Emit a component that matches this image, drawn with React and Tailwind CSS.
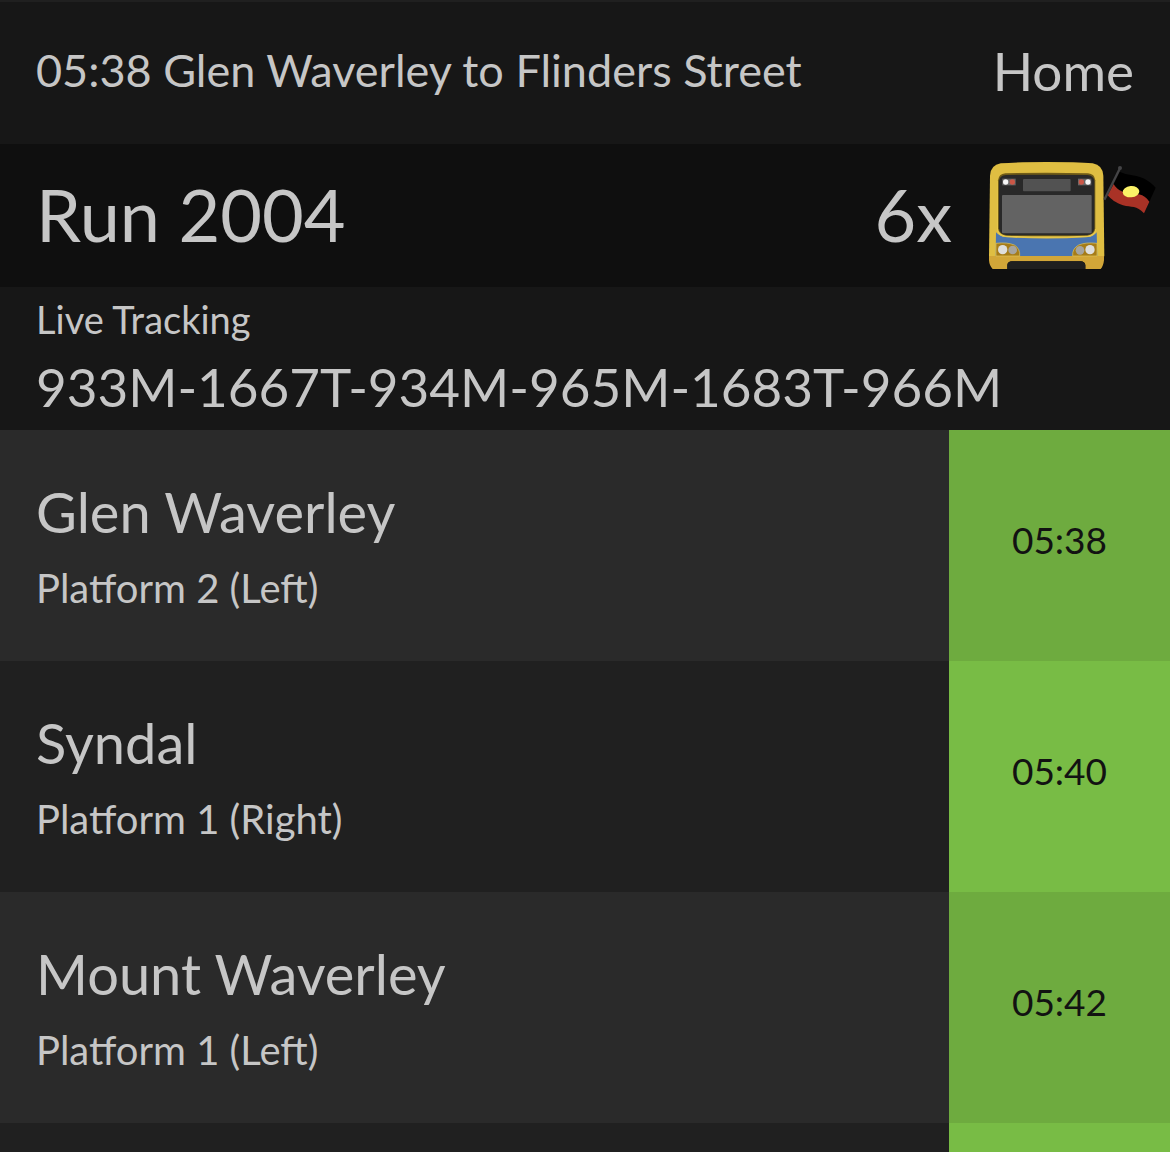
const stops = [
  { name: "Glen Waverley", platform: "Platform 2 (Left)", time: "05:38" },
  { name: "Syndal", platform: "Platform 1 (Right)", time: "05:40" },
  { name: "Mount Waverley", platform: "Platform 1 (Left)", time: "05:42" },
];

function TrainIcon() {
  return (
    <svg viewBox="54 48 504 327" className="h-[109px] w-[168px] shrink-0" role="img" aria-label="Train">
      {/* Shell */}
      <path d="M60 92 Q62 60 92 55 Q140 51 230 51 Q320 51 368 55 Q398 60 400 92 L403 334 H57 Z" fill="#dfbe42" />
      <path d="M57 333 H402 V346 Q400 364 392 372 H346 V360 Q344 349 332 349 H126 Q113 349 112 360 V372 H68 Q58 362 57 346 Z" fill="#d2a638" />
      <path d="M112 372 V360 Q114 349 126 349 H332 Q344 349 346 360 V372 Z" fill="#1f1f1f" />

      {/* Windscreen */}
      <path d="M78 262 Q90 276 110 277 Q230 284 350 277 Q370 276 380 262 L382 333 H77 Z" fill="#4a75b0" />
      <path d="M83 108 Q84 88 105 86 Q230 82 355 86 Q376 88 377 108 L378 254 Q376 274 352 276 Q230 281 108 276 Q83 274 81 254 Z" fill="#e8c84c" />
      <path d="M84 106 Q86 87 106 85 Q230 82 354 85 Q374 87 376 106 L376 250 Q374 270 352 272 Q230 275 108 272 Q86 270 84 250 Z" fill="#705c18" />
      <path d="M87 108 Q89 92 108 90 Q230 88 352 90 Q371 92 373 108 L373 250 Q371 268 352 270 Q230 272 108 270 Q89 268 87 250 Z" fill="#292929" />
      <rect x="159" y="102" width="143" height="37" rx="3" fill="#525252" />
      <rect x="96" y="150" width="269" height="115" rx="3" fill="#636363" />

      {/* Marker lights */}
      <rect x="97" y="101" width="40" height="20" fill="#686868" />
      <rect x="324" y="101" width="40" height="20" fill="#686868" />
      <circle cx="107" cy="111" r="8" fill="#f5f5f5" />
      <circle cx="127" cy="111" r="8" fill="#cb5747" />
      <circle cx="334" cy="111" r="8" fill="#cb5747" />
      <circle cx="354" cy="111" r="8" fill="#f5f5f5" />

      {/* Headlights */}
      <path d="M78 295 Q112 291 133 300 Q151 311 149 333 H78 Z" fill="#a67c18" stroke="#e3c75b" strokeWidth="2" />
      <path d="M381 295 Q347 291 326 300 Q306 311 308 333 H381 Z" fill="#a67c18" stroke="#e3c75b" strokeWidth="2" />
      <circle cx="98" cy="314" r="14" fill="#dededc" />
      <circle cx="128" cy="315" r="13" fill="#a6a49e" />
      <circle cx="330" cy="316" r="13" fill="#a6a49e" />
      <circle cx="360" cy="314" r="14" fill="#dededc" />

      {/* Flag */}
      <path d="M449 80 C475 93 490 86 520 100 C540 110 548 119 557 128 L538 170 C520 144 498 147 478 145 C454 142 440 133 431 117 Z" fill="#000000" />
      <path d="M431 117 C440 133 454 142 478 145 C498 147 520 144 538 170 L522 205 C500 181 484 188 459 181 C437 174 424 163 413 151 Z" fill="#a93226" />
      <ellipse cx="483" cy="140" rx="25" ry="17" fill="#fbf267" transform="rotate(-5 483 140)" />
      <path d="M450 70 L403 164" stroke="#444446" strokeWidth="7" />
      <circle cx="450" cy="69" r="6" fill="#444446" />
    </svg>
  );
}

function StopRow({ stop }) {
  return (
    <li className="group flex h-[231px] odd:bg-[#2a2a2a] even:bg-[#202020]">
      <div className="flex min-w-0 flex-1 flex-col justify-center gap-3 pl-9">
        <h2 className="text-[56px] leading-[72px]">{stop.name}</h2>
        <p className="text-[40px] leading-[56px]">{stop.platform}</p>
      </div>
      <div className="flex w-[221px] items-center justify-center pb-3 text-[37px] text-[#121212] group-odd:bg-[#6eab3f] group-even:bg-[#78bc45]">
        <time>{stop.time}</time>
      </div>
    </li>
  );
}

export default function App() {
  return (
    <div className="flex min-h-screen flex-col bg-[#171717] font-['Lato',sans-serif] text-[#c6c6c6]">
      <header className="flex h-36 items-center justify-between border-t-2 border-[#202020] px-9 pb-1">
        <h1 className="text-[45px]">05:38 Glen Waverley to Flinders Street</h1>
        <a href="#home" className="text-[53px]">Home</a>
      </header>

      <section className="flex h-[143px] items-center bg-[#0f0f0f] pl-9 pr-3.5">
        <h2 className="flex-1 pb-1 text-[72px]">Run 2004</h2>
        <span className="mr-9 pb-1 text-[72px]">6x</span>
        <TrainIcon />
      </section>

      <section className="flex h-[143px] flex-col justify-center gap-3 px-9 pb-1">
        <p className="text-[38px] leading-[48px]">Live Tracking</p>
        <p className="text-[53px] leading-[64px]">933M-1667T-934M-965M-1683T-966M</p>
      </section>

      <ul>
        {stops.map((stop) => (
          <StopRow key={stop.name} stop={stop} />
        ))}
      </ul>

      <div className="flex flex-1 bg-[#202020]">
        <div className="flex-1" />
        <div className="w-[221px] bg-[#78bc45]" />
      </div>
    </div>
  );
}
